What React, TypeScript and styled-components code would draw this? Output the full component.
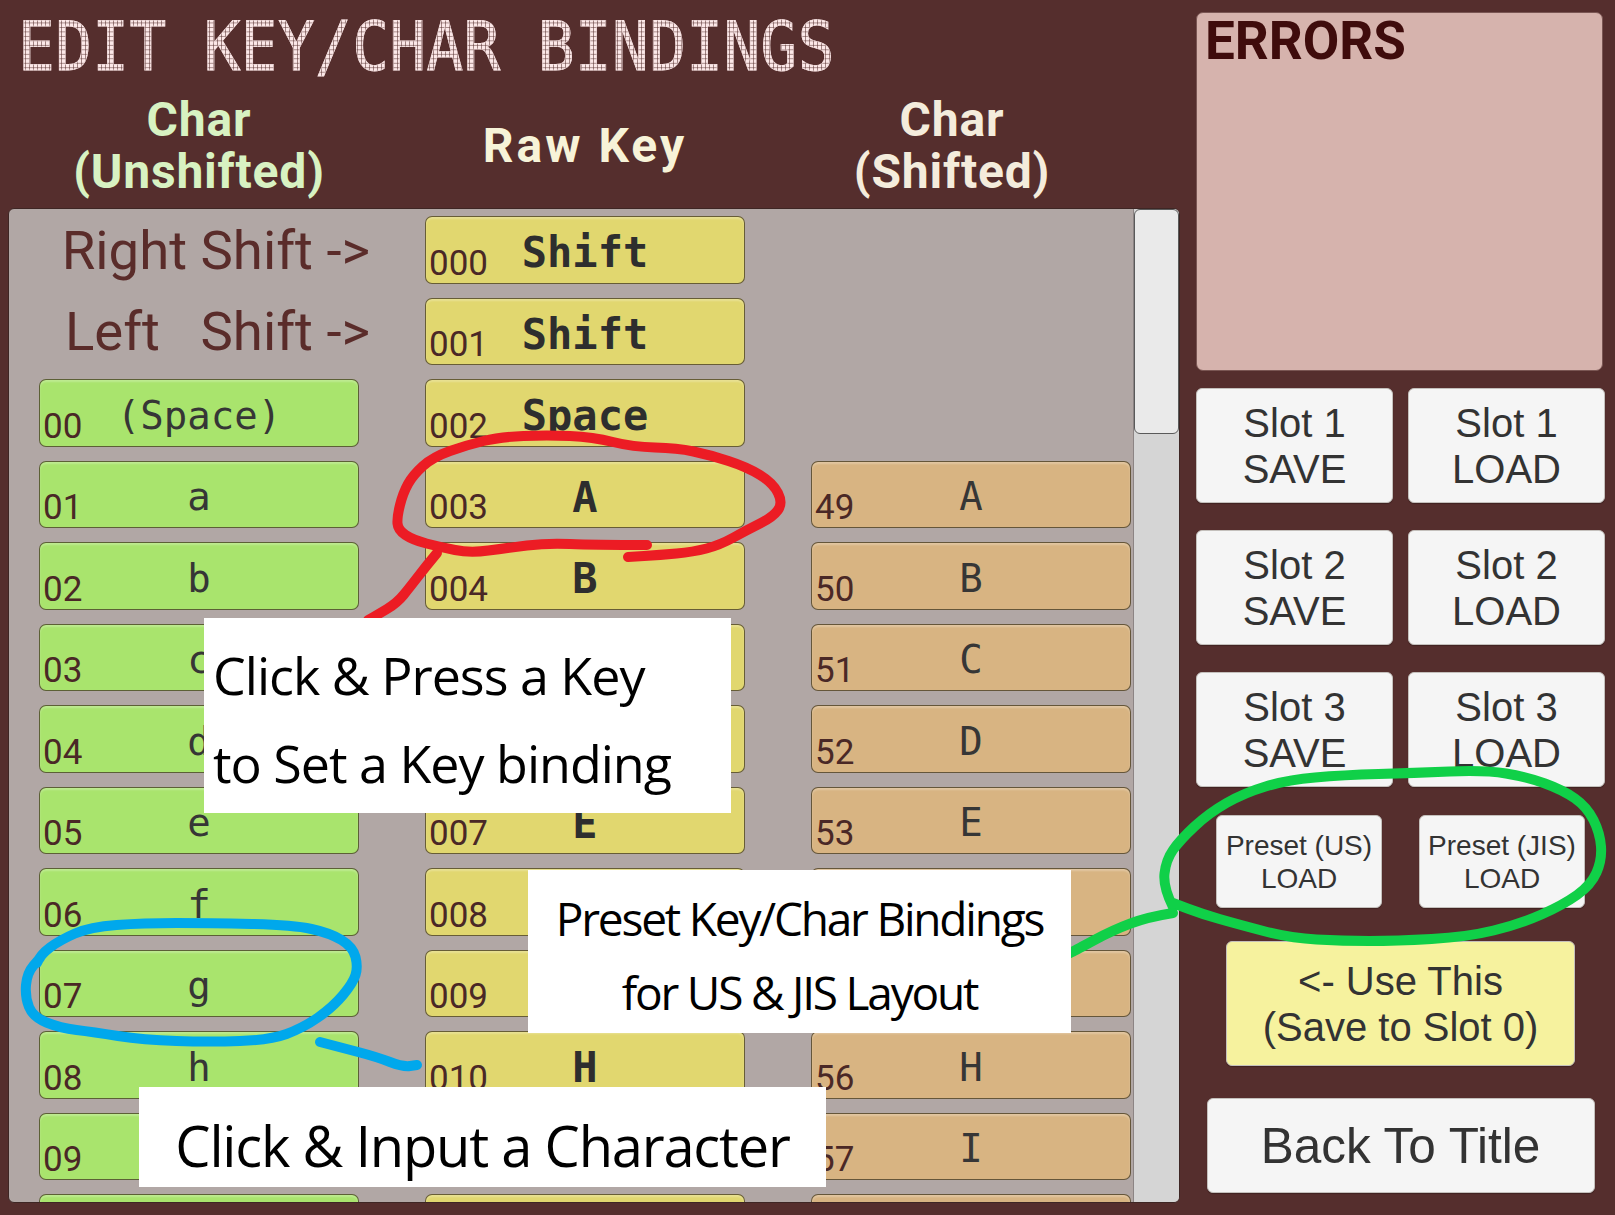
import styled, { createGlobalStyle } from 'styled-components';

const GlobalStyle = createGlobalStyle`
  html, body {
    margin: 0;
    padding: 0;
    background: #552e2d;
  }
  body {
    font-family: 'Liberation Sans', Arial, sans-serif;
  }
`;

const Page = styled.div`
  position: relative;
  width: 1615px;
  height: 1215px;
  display: flex;
  overflow: hidden;
  background: #552e2d;
`;

const LeftColumn = styled.div`
  width: 1172px;
  margin-left: 8px;
  display: flex;
  flex-direction: column;
`;

const Title = styled.h1`
  margin: 9px 0 0 10px;
  height: 75px;
  font-family: 'DejaVu Sans Mono', monospace;
  font-weight: normal;
  font-size: 61px;
  line-height: 74px;
  letter-spacing: 0.4px;
  white-space: pre;
`;

const TitleText = styled.span`
  display: inline-block;
  transform: scaleY(1.12);
  color: transparent;
  background-image: linear-gradient(90deg, transparent 0 3px, rgba(85, 46, 45, 0.55) 3px 4px),
    linear-gradient(0deg, transparent 0 3px, rgba(85, 46, 45, 0.55) 3px 4px),
    linear-gradient(#fce8e8, #fce8e8);
  background-size: 4px 4px, 4px 4px, auto;
  -webkit-background-clip: text;
  background-clip: text;
  -webkit-text-stroke: 0.8px rgba(252, 232, 232, 0.55);
`;

const HeaderRow = styled.div`
  display: grid;
  grid-template-columns: repeat(3, 320px);
  column-gap: 66px;
  padding-left: 31px;
  height: 104px;
  margin: 10px 0;
  align-items: center;
`;

const HeaderCell = styled.div<{ $color: string; $shift?: number; $spacing?: number }>`
  text-align: center;
  font-family: Roboto, sans-serif;
  font-weight: 700;
  font-size: 48px;
  line-height: 52px;
  letter-spacing: ${(p) => p.$spacing ?? 0.8}px;
  color: ${(p) => p.$color};
  margin-right: ${(p) => p.$shift ?? 0}px;
`;

const Panel = styled.div`
  height: 995px;
  display: flex;
  background: #b1a7a5;
  border: 1px solid #3e2624;
  border-radius: 6px;
  overflow: hidden;
  box-sizing: border-box;
`;

const KeyGrid = styled.div`
  flex: 1;
  display: grid;
  grid-template-columns: repeat(3, 320px);
  grid-auto-rows: 67.5px;
  column-gap: 66px;
  row-gap: 14px;
  padding: 7px 0 0 30px;
  align-content: start;
`;

const ShiftLabel = styled.div`
  display: flex;
  align-items: center;
  justify-content: flex-end;
  margin-right: -11px;
  font-family: Roboto, sans-serif;
  font-size: 54.5px;
  color: #5a2c2a;
  white-space: pre;
`;

const Cell = styled.div<{ $bg: string }>`
  display: grid;
  background: ${(p) => p.$bg};
  border: 1.5px solid rgba(72, 62, 40, 0.8);
  border-radius: 7px;
  box-shadow: inset 0 2px 2px rgba(255, 255, 255, 0.25);
  box-sizing: border-box;
`;

const CellIndex = styled.span`
  grid-area: 1 / 1;
  align-self: end;
  justify-self: start;
  margin: 0 0 2px 3px;
  font-family: Roboto, sans-serif;
  font-size: 35px;
  line-height: 1;
  color: #4a2826;
`;

const CellValue = styled.span<{ $bold?: boolean }>`
  grid-area: 1 / 1;
  align-self: center;
  justify-self: center;
  margin-top: ${(p) => (p.$bold ? 6 : 5)}px;
  font-family: 'DejaVu Sans Mono', monospace;
  font-weight: ${(p) => (p.$bold ? 700 : 400)};
  font-size: ${(p) => (p.$bold ? 42 : 39)}px;
  color: ${(p) => (p.$bold ? '#2e2e2e' : '#363636')};
`;

const ScrollTrack = styled.div`
  width: 45px;
  flex-shrink: 0;
  background: #d5d5d5;
  border-left: 1px solid #8c8484;
  display: flex;
  flex-direction: column;
`;

const ScrollThumb = styled.div`
  height: 225px;
  background: #eaeaea;
  border: 1px solid #5a5a5a;
  border-radius: 6px;
  box-sizing: border-box;
`;

const RightColumn = styled.div`
  width: 409px;
  margin-left: 16px;
  padding-top: 12px;
  display: flex;
  flex-direction: column;
  align-items: center;
`;

const ErrorBox = styled.div`
  align-self: stretch;
  width: 407px;
  height: 359px;
  background: #d6b3ad;
  border: 1px solid #7a5653;
  border-radius: 7px;
  padding: 2px 8px;
  box-sizing: border-box;
`;

const ErrorTitle = styled.div`
  font-family: Roboto, sans-serif;
  font-weight: 700;
  font-size: 53px;
  line-height: 1;
  color: #3f0c0c;
`;

const SlotGrid = styled.div`
  align-self: stretch;
  display: grid;
  grid-template-columns: 197px 197px;
  grid-auto-rows: 115px;
  column-gap: 15px;
  row-gap: 27px;
  margin-top: 17px;
`;

const PresetRow = styled.div`
  display: flex;
  gap: 37px;
  margin-top: 28px;
`;

const Button = styled.button<{ $size: number; $lh: number; $w?: number; $h?: number; $bg?: string }>`
  width: ${(p) => (p.$w ? `${p.$w}px` : 'auto')};
  height: ${(p) => (p.$h ? `${p.$h}px` : 'auto')};
  padding: 0;
  background: ${(p) => p.$bg ?? '#f5f5f5'};
  border: 1px solid #c4c0bc;
  border-radius: 6px;
  box-shadow: 0 1px 1px rgba(0, 0, 0, 0.25);
  font-family: 'Liberation Sans', Arial, sans-serif;
  font-size: ${(p) => p.$size}px;
  line-height: ${(p) => p.$lh}px;
  color: #333;
  white-space: nowrap;
  display: flex;
  flex-direction: column;
  align-items: center;
  justify-content: center;
`;

const UseThisButton = styled(Button)`
  margin-top: 33px;
`;

const BackButton = styled(Button)`
  margin-top: 32px;
`;

const Callout = styled.div<{ $x: number; $y: number; $w: number; $h: number }>`
  position: absolute;
  left: ${(p) => p.$x}px;
  top: ${(p) => p.$y}px;
  width: ${(p) => p.$w}px;
  height: ${(p) => p.$h}px;
  background: #fff;
  box-sizing: border-box;
  font-family: 'Open Sans', 'Noto Sans', sans-serif;
  color: #000;
  white-space: nowrap;
  z-index: 2;
`;

const KeyCallout = styled(Callout)`
  padding: 13px 0 0 9px;
  font-size: 52px;
  line-height: 88px;
  letter-spacing: -1px;
`;

const PresetCallout = styled(Callout)`
  padding-top: 11px;
  text-align: center;
  font-size: 46px;
  line-height: 74px;
  letter-spacing: -2.2px;
`;

const CharCallout = styled(Callout)`
  padding-top: 13px;
  text-align: center;
  font-size: 56px;
  line-height: 90px;
  letter-spacing: -1.2px;
`;

const Strokes = styled.svg`
  position: absolute;
  left: 0;
  top: 0;
  pointer-events: none;
  z-index: 1;
`;

type Pt = [number, number];

// quadratic curve through midpoints so the marker lines look hand drawn
const smooth = (pts: Pt[]) => {
  let d = `M${pts[0][0]} ${pts[0][1]}`;
  for (let i = 1; i < pts.length - 1; i++) {
    const mx = (pts[i][0] + pts[i + 1][0]) / 2;
    const my = (pts[i][1] + pts[i + 1][1]) / 2;
    d += ` Q${pts[i][0]} ${pts[i][1]} ${mx} ${my}`;
  }
  const last = pts[pts.length - 1];
  return d + ` L${last[0]} ${last[1]}`;
};

const redLoop: Pt[] = [
  [647, 545], [593, 545], [547, 543], [507, 548], [470, 553], [440, 547], [413, 540],
  [398, 530], [397, 517], [403, 493], [413, 475], [433, 457], [467, 445], [500, 437],
  [547, 435], [593, 437], [633, 447], [677, 448], [710, 455], [747, 467], [773, 483],
  [783, 503], [773, 517], [747, 530], [720, 545], [693, 552], [660, 555], [628, 557],
];
const redTail: Pt[] = [[437, 553], [427, 565], [410, 587], [397, 603], [377, 615], [368, 620]];

const blueLoop: Pt[] = [
  [37, 963], [40, 955], [60, 940], [90, 927], [143, 923], [210, 923], [293, 925],
  [330, 933], [353, 947], [358, 967], [353, 983], [333, 1007], [303, 1028], [270, 1040],
  [210, 1042], [143, 1040], [93, 1032], [60, 1028], [33, 1017], [25, 997], [27, 973], [40, 958],
];
const blueTail: Pt[] = [[320, 1042], [343, 1048], [377, 1057], [403, 1067], [417, 1065]];

const greenLoop: Pt[] = [
  [1173, 907], [1163, 887], [1166, 860], [1180, 840], [1209, 813], [1244, 793], [1287, 780],
  [1343, 775], [1414, 773], [1485, 770], [1527, 777], [1563, 790], [1587, 807], [1600, 833],
  [1602, 860], [1591, 885], [1563, 905], [1520, 924], [1467, 937], [1396, 941], [1343, 941],
  [1290, 938], [1237, 924], [1202, 914], [1173, 903],
];
const greenTail: Pt[] = [[1173, 913], [1148, 917], [1113, 930], [1076, 950], [1068, 954]];

type KeyCell = { idx: string; val: string };
type Row = { label?: string; char?: KeyCell; raw: KeyCell; shifted?: KeyCell };

const pad = (n: number, len: number) => String(n).padStart(len, '0');

const rows: Row[] = [
  { label: 'Right Shift ->', raw: { idx: '000', val: 'Shift' } },
  { label: 'Left   Shift ->', raw: { idx: '001', val: 'Shift' } },
  { char: { idx: '00', val: '(Space)' }, raw: { idx: '002', val: 'Space' } },
  ...Array.from({ length: 10 }, (_, i) => {
    const r = i + 3;
    const lower = String.fromCharCode(97 + i);
    return {
      char: { idx: pad(r - 2, 2), val: lower },
      raw: { idx: pad(r, 3), val: lower.toUpperCase() },
      shifted: { idx: String(46 + r), val: lower.toUpperCase() },
    };
  }),
];

function KeyButton({ cell, bg, bold }: { cell: KeyCell; bg: string; bold?: boolean }) {
  return (
    <Cell $bg={bg}>
      <CellIndex>{cell.idx}</CellIndex>
      <CellValue $bold={bold}>{cell.val}</CellValue>
    </Cell>
  );
}

export default function App() {
  return (
    <>
      <GlobalStyle />
      <Page>
        <LeftColumn>
          <Title>
            <TitleText>EDIT KEY/CHAR BINDINGS</TitleText>
          </Title>
          <HeaderRow>
            <HeaderCell $color='#d8f2c2'>
              Char
              <br />
              (Unshifted)
            </HeaderCell>
            <HeaderCell $color='#f7f3d8' $spacing={3}>
              Raw Key
            </HeaderCell>
            <HeaderCell $color='#f4ecdc' $shift={38}>
              Char
              <br />
              (Shifted)
            </HeaderCell>
          </HeaderRow>
          <Panel>
            <KeyGrid>
              {rows.map((row, i) => [
                row.label ? (
                  <ShiftLabel key={`l${i}`}>{row.label}</ShiftLabel>
                ) : (
                  <KeyButton key={`c${i}`} cell={row.char!} bg='#a9e46d' />
                ),
                <KeyButton key={`r${i}`} cell={row.raw} bg='#e1d76f' bold />,
                row.shifted ? (
                  <KeyButton key={`s${i}`} cell={row.shifted} bg='#d8b482' />
                ) : (
                  <div key={`e${i}`} />
                ),
              ])}
            </KeyGrid>
            <ScrollTrack>
              <ScrollThumb />
            </ScrollTrack>
          </Panel>
        </LeftColumn>

        <RightColumn>
          <ErrorBox>
            <ErrorTitle>ERRORS</ErrorTitle>
          </ErrorBox>
          <SlotGrid>
            {[1, 2, 3].map((n) => [
              <Button key={`s${n}`} $size={40} $lh={46}>
                <span>Slot {n}</span>
                <span>SAVE</span>
              </Button>,
              <Button key={`l${n}`} $size={40} $lh={46}>
                <span>Slot {n}</span>
                <span>LOAD</span>
              </Button>,
            ])}
          </SlotGrid>
          <PresetRow>
            <Button $size={28} $lh={33} $w={166} $h={93}>
              <span>Preset (US)</span>
              <span>LOAD</span>
            </Button>
            <Button $size={28} $lh={33} $w={166} $h={93}>
              <span>Preset (JIS)</span>
              <span>LOAD</span>
            </Button>
          </PresetRow>
          <UseThisButton $size={40} $lh={46} $w={349} $h={125} $bg='#f6f29e'>
            <span>&lt;- Use This</span>
            <span>(Save to Slot 0)</span>
          </UseThisButton>
          <BackButton $size={49.5} $lh={56} $w={388} $h={95}>
            Back To Title
          </BackButton>
        </RightColumn>

        <Strokes width={1615} height={1215} viewBox='0 0 1615 1215'>
          <g fill='none' strokeWidth={10} strokeLinecap='round' strokeLinejoin='round'>
            <path d={smooth(redLoop)} stroke='#ec1c24' />
            <path d={smooth(redTail)} stroke='#ec1c24' />
            <path d={smooth(blueLoop)} stroke='#00a8ec' />
            <path d={smooth(blueTail)} stroke='#00a8ec' />
            <path d={smooth(greenLoop)} stroke='#10d048' />
            <path d={smooth(greenTail)} stroke='#10d048' />
          </g>
        </Strokes>

        <KeyCallout $x={204} $y={618} $w={527} $h={195}>
          Click &amp; Press a Key
          <br />
          to Set a Key binding
        </KeyCallout>
        <PresetCallout $x={528} $y={870} $w={543} $h={163}>
          Preset Key/Char Bindings
          <br />
          for US &amp; JIS Layout
        </PresetCallout>
        <CharCallout $x={139} $y={1087} $w={687} $h={100}>
          Click &amp; Input a Character
        </CharCallout>
      </Page>
    </>
  );
}
